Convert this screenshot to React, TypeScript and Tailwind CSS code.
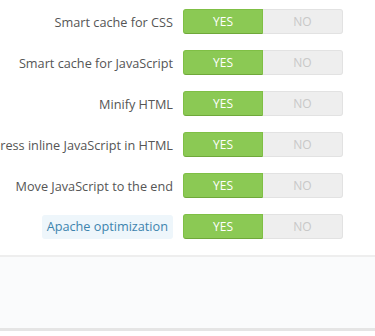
import { useState } from "react";

const options = [
  { label: "Smart cache for CSS" },
  { label: "Smart cache for JavaScript" },
  { label: "Minify HTML" },
  { label: "Compress inline JavaScript in HTML" },
  { label: "Move JavaScript to the end" },
  { label: "Apache optimization", hint: true },
];

function Toggle() {
  const [on, setOn] = useState(true);
  return (
    <div className="flex w-[160px] h-[25px] rounded-[3px] text-[12px] leading-none select-none">
      <button
        onClick={() => setOn(true)}
        className={`w-1/2 rounded-l-[3px] ${
          on
            ? "bg-[#8bc954] text-white border border-[#7fbf45] border-b-[#6fa83a]"
            : "bg-[#eeeeee] text-[#cccccc] border border-[#e2e2e2]"
        }`}
      >
        YES
      </button>
      <button
        onClick={() => setOn(false)}
        className={`w-1/2 rounded-r-[3px] ${
          !on
            ? "bg-[#8bc954] text-white border border-[#7fbf45] border-b-[#6fa83a]"
            : "bg-[#eeeeee] text-[#c8c8c8] border border-[#e2e2e2] border-l-0"
        }`}
      >
        NO
      </button>
    </div>
  );
}

export default function App() {
  return (
    <div className="w-[375px] h-[336px] bg-white overflow-hidden font-['Open_Sans',sans-serif]">
      <div className="flex flex-col gap-4 pt-[9px] pb-4">
        {options.map((o) => (
          <div key={o.label} className="flex items-center">
            <div className="w-[173px] flex justify-end shrink-0 pt-[3px]">
              {o.hint ? (
                <span className="whitespace-nowrap text-[12.7px] text-[#3d84ae] bg-[#eef6fb] rounded-[3px] px-[5px] py-[2px] -mt-[2px]">
                  {o.label}
                </span>
              ) : (
                <span className="whitespace-nowrap text-[12.7px] text-[#555555]">{o.label}</span>
              )}
            </div>
            <div className="ml-[10px]">
              <Toggle />
            </div>
          </div>
        ))}
      </div>
      <div className="border-t-2 border-[#eeeeee] bg-[#fafbfc] h-[73px]" />
      <div className="h-[3px] bg-[#e5e5e5]" />
    </div>
  );
}
